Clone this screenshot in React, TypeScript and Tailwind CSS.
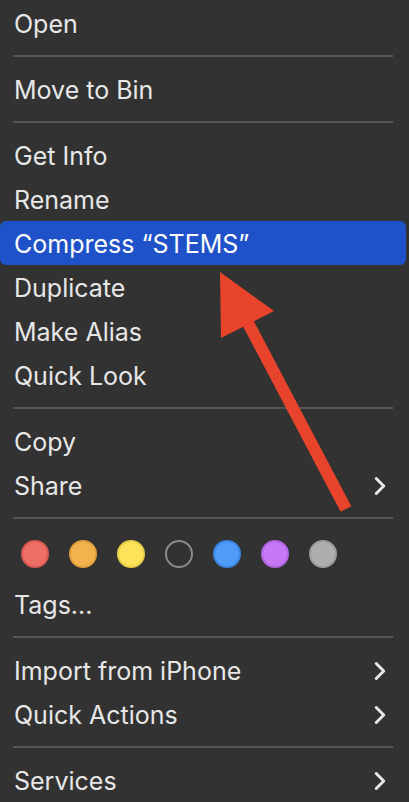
import React from "react";
import { ChevronRight } from "lucide-react";

type Item = { label: string; sub?: boolean; active?: boolean };

const groups: Item[][] = [
  [{ label: "Open" }],
  [{ label: "Move to Bin" }],
  [
    { label: "Get Info" },
    { label: "Rename" },
    { label: "Compress “STEMS”", active: true },
    { label: "Duplicate" },
    { label: "Make Alias" },
    { label: "Quick Look" },
  ],
  [{ label: "Copy" }, { label: "Share", sub: true }],
];

const tail: Item[][] = [
  [{ label: "Import from iPhone", sub: true }, { label: "Quick Actions", sub: true }],
  [{ label: "Services", sub: true }],
];

const tagColors = [
  "bg-[#ee6f66] border-[#d95a52]",
  "bg-[#f4b24f] border-[#e09e3d]",
  "bg-[#fde35a] border-[#e8cf48]",
  "bg-transparent border-[#8a8a8a]",
  "bg-[#4f9bf9] border-[#3c87e4]",
  "bg-[#c678f5] border-[#b165e0]",
  "bg-[#aeaeae] border-[#9b9b9b]",
];

const Row = ({ item }: { item: Item }) => (
  <div
    className={`h-[44px] flex items-center justify-between pl-[14px] pr-[11px] rounded-[6px] ${
      item.active ? "bg-[#1f52c9] text-white" : "text-[#e7e7e7]"
    }`}
  >
    <span className="pt-[3px]">{item.label}</span>
    {item.sub && <ChevronRight size={30} strokeWidth={2.4} className="text-[#e7e7e7] mt-[2px]" />}
  </div>
);

const Separator = () => (
  <div className="h-[22px] flex items-center px-[13px]">
    <div className="h-[2px] w-full bg-[#555555]" />
  </div>
);

const App = () => {
  return (
    <div
      className="relative w-[409px] h-[802px] overflow-hidden bg-[#323232] text-[25px] pr-[3px] pt-[1px]"
      style={{ fontFamily: "Inter, 'Liberation Sans', sans-serif" }}
    >
      {groups.map((g, i) => (
        <React.Fragment key={i}>
          {g.map((item) => (
            <Row key={item.label} item={item} />
          ))}
          <Separator />
        </React.Fragment>
      ))}

      {/* Tags */}
      <div className="h-[53px] flex items-center gap-[20px] pl-[21px] pb-[3px]">
        {tagColors.map((c, i) => (
          <div key={i} className={`w-[28px] h-[28px] rounded-full border-2 ${c}`} />
        ))}
      </div>
      <Row item={{ label: "Tags..." }} />
      <Separator />

      {tail.map((g, i) => (
        <React.Fragment key={i}>
          {g.map((item) => (
            <Row key={item.label} item={item} />
          ))}
          {i < tail.length - 1 && <Separator />}
        </React.Fragment>
      ))}

      {/* annotation arrow */}
      <svg className="absolute left-0 top-0 pointer-events-none" width="409" height="802">
        <line x1="346" y1="509" x2="248" y2="323" stroke="#e8432b" strokeWidth="12" />
        <polygon points="220,272 274,311 221,338" fill="#e8432b" />
      </svg>
    </div>
  );
};

export default App;
